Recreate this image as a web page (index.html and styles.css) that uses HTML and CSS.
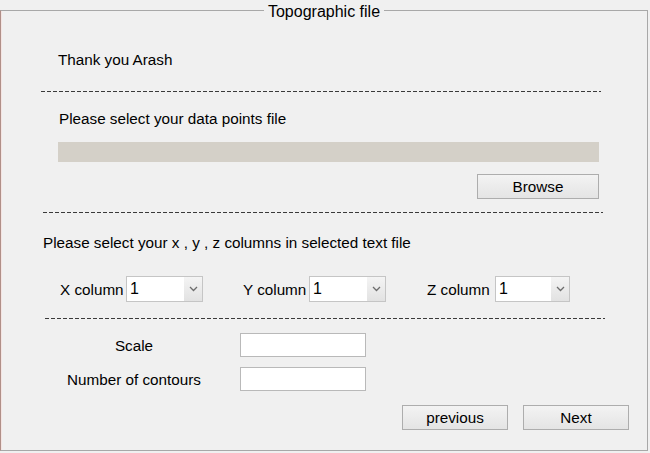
FILE: index.html
```html
<!DOCTYPE html>
<html>
<head>
<meta charset="utf-8">
<link rel="stylesheet" href="styles.css">
</head>
<body>
<fieldset class="panel">
  <legend class="title">Topographic file</legend>
  <div class="greeting">Thank you Arash</div>
  <div class="dash dash-1"></div>
  <div class="file-block">
    <div class="label">Please select your data points file</div>
    <div class="path-bar"></div>
    <div class="browse-row"><button class="btn btn-browse">Browse</button></div>
  </div>
  <div class="dash dash-2"></div>
  <div class="cols-label">Please select your x , y , z columns in selected text file</div>
  <div class="cols-row">
    <div class="col-group">
      <span class="col-name">X column</span>
      <div class="combo"><span class="combo-value">1</span><span class="combo-arrow"><svg width="9" height="6" viewBox="0 0 9 6"><path d="M1 1 L4.5 4.5 L8 1" fill="none" stroke="#6d6d6d" stroke-width="1.3"/></svg></span></div>
    </div>
    <div class="col-group">
      <span class="col-name">Y column</span>
      <div class="combo"><span class="combo-value">1</span><span class="combo-arrow"><svg width="9" height="6" viewBox="0 0 9 6"><path d="M1 1 L4.5 4.5 L8 1" fill="none" stroke="#6d6d6d" stroke-width="1.3"/></svg></span></div>
    </div>
    <div class="col-group">
      <span class="col-name col-name-z">Z column</span>
      <div class="combo combo-narrow"><span class="combo-value">1</span><span class="combo-arrow"><svg width="9" height="6" viewBox="0 0 9 6"><path d="M1 1 L4.5 4.5 L8 1" fill="none" stroke="#6d6d6d" stroke-width="1.3"/></svg></span></div>
    </div>
  </div>
  <div class="dash dash-3"></div>
  <div class="params">
    <span class="param-label">Scale</span>
    <input class="field" type="text">
    <span class="param-label">Number of contours</span>
    <input class="field" type="text">
  </div>
  <div class="nav-row">
    <button class="btn btn-nav">previous</button>
    <button class="btn btn-nav">Next</button>
  </div>
</fieldset>
</body>
</html>
```
FILE: styles.css
```css
html, body {
  margin: 0;
  padding: 0;
}
body {
  width: 650px;
  height: 453px;
  overflow: hidden;
  background: #f0f0f0;
  font-family: "Liberation Sans", Arial, sans-serif;
  font-size: 15.25px;
  color: #000;
}
.panel {
  box-sizing: border-box;
  width: 648px;
  height: 451px;
  margin: 0;
  padding: 0;
  border: 1px solid #a8a8a8;
  border-left-color: #b08f88;
  box-shadow: inset 1px 0 0 #f4e4e2;
  min-width: 0;
}
.title {
  margin: 0 auto;
  padding: 4px 4px 0 4px;
  line-height: 16px;
  font-size: 16px;
}
.greeting {
  margin: 31px 0 0 57px;
  line-height: 18px;
}
.dash {
  height: 1px;
  background: repeating-linear-gradient(to right, #3a3a3a 0 4px, transparent 4px 6px);
}
.dash-1 {
  margin: 22px 0 0 40px;
  width: 560px;
}
.file-block {
  margin: 18px 0 0 57px;
  width: 541px;
}
.label {
  margin-left: 1px;
  line-height: 18px;
}
.path-bar {
  margin-top: 14px;
  height: 20px;
  background: #d4d0c8;
}
.browse-row {
  margin-top: 12px;
  display: flex;
  justify-content: flex-end;
}
.btn {
  box-sizing: border-box;
  height: 25px;
  padding: 0;
  border: 1px solid #adadad;
  background: linear-gradient(#f3f3f3, #e4e4e4);
  font-family: "Liberation Sans", Arial, sans-serif;
  font-size: 15.25px;
  color: #000;
}
.btn-browse {
  width: 122px;
}
.dash-2 {
  margin: 13px 0 0 42px;
  width: 560px;
}
.cols-label {
  margin: 21px 0 0 42px;
  line-height: 18px;
}
.cols-row {
  margin: 24px 0 0 59px;
  display: grid;
  grid-template-columns: 183px 184px auto;
}
.col-group {
  display: flex;
  align-items: center;
}
.col-name {
  width: 66px;
  flex: none;
}
.col-name-z {
  width: 68px;
}
.combo {
  box-sizing: border-box;
  width: 77px;
  height: 26px;
  display: flex;
  background: #fff;
  border: 1px solid #c5c5c5;
}
.combo-narrow {
  width: 75px;
}
.combo-value {
  flex: 1;
  padding: 3px 0 0 3px;
  line-height: 18px;
  font-size: 16px;
}
.combo-arrow {
  width: 18px;
  display: flex;
  align-items: center;
  justify-content: center;
  background: linear-gradient(#f4f4f4, #e2e2e2);
}
.dash-3 {
  margin: 16px 0 0 44px;
  width: 560px;
}
.params {
  margin: 14px 0 0 49px;
  display: grid;
  grid-template-columns: 168px 126px;
  column-gap: 22px;
  row-gap: 10px;
  align-items: center;
}
.param-label {
  text-align: center;
}
.field {
  box-sizing: border-box;
  width: 126px;
  height: 24px;
  margin: 0;
  border: 1px solid #b9b9b9;
  background: #fff;
}
.nav-row {
  margin: 14px 18px 0 0;
  display: flex;
  justify-content: flex-end;
  gap: 15px;
}
.btn-nav {
  width: 106px;
}
```
